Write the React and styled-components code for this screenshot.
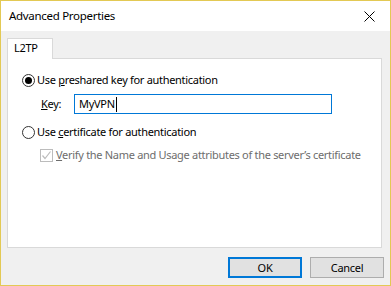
import React from "react";
import styled, { createGlobalStyle } from "styled-components";

const Global = createGlobalStyle`
  html, body { margin: 0; padding: 0; background: #ffffff; }
  * { box-sizing: border-box; }
`;

const Window = styled.div`
  width: 391px;
  height: 286px;
  border: 1px solid #e3c954;
  display: flex;
  flex-direction: column;
  font-family: "Noto Sans", "Open Sans", sans-serif;
  font-size: 11px;
  letter-spacing: -0.3px;
  color: #000;
  white-space: nowrap;
`;

const TitleBar = styled.div`
  height: 30px;
  background: #fff;
  display: flex;
  align-items: center;
  justify-content: space-between;
  padding-left: 8px;
`;

const Title = styled.div`
  font-size: 11.5px;
  line-height: 16px;
  margin-top: -1px;
`;

const CloseButton = styled.div`
  width: 46px;
  height: 30px;
  display: flex;
  align-items: center;
  justify-content: center;
  margin-right: -2px;
`;

const Body = styled.div`
  flex: 1;
  background: #f0f0f0;
  padding: 7px 6px 0 6px;
  display: flex;
  flex-direction: column;
`;

const TabStrip = styled.div`
  display: flex;
  height: 21px;
  margin-right: 2px;
  position: relative;
  z-index: 1;
`;

const Tab = styled.div`
  width: 46px;
  height: 21px;
  border: 1px solid #d9d9d9;
  border-bottom: none;
  background: #fff;
  padding-left: 6px;
  line-height: 18px;
`;

const Panel = styled.div`
  height: 190px;
  margin-top: -1px;
  margin-right: 2px;
  background: #fff;
  border: 1px solid #d9d9d9;
  padding: 13px 0 0 14px;
  display: flex;
  flex-direction: column;
`;

const OptionRow = styled.label`
  display: flex;
  align-items: center;
  height: 16px;
  line-height: 16px;
  margin-top: ${(p) => p.$top || 0}px;
  margin-left: ${(p) => p.$indent || 0}px;
  color: ${(p) => (p.$disabled ? "#6d6d6d" : "#000")};
`;

const RadioCircle = styled.span`
  width: 13px;
  height: 13px;
  border-radius: 50%;
  border: 1px solid #333;
  background: #fff;
  display: flex;
  align-items: center;
  justify-content: center;
  margin-right: 2px;
  flex: none;
  &::after {
    content: "";
    display: ${(p) => (p.$checked ? "block" : "none")};
    width: 7px;
    height: 7px;
    border-radius: 50%;
    background: #000;
  }
`;

const CheckBox = styled.span`
  width: 13px;
  height: 13px;
  border: 1px solid #bcbcbc;
  background: #fff;
  display: flex;
  align-items: center;
  justify-content: center;
  margin-right: 3px;
  flex: none;
`;

const KeyRow = styled.div`
  display: flex;
  align-items: center;
  margin-top: 6px;
  margin-left: 19px;
`;

const KeyLabel = styled.span`
  width: 33px;
  line-height: 16px;
`;

const TextBox = styled.div`
  width: 258px;
  height: 20px;
  border: 1px solid #0078d7;
  padding-left: 4px;
  display: flex;
  align-items: center;
  line-height: 16px;
`;

const Caret = styled.span`
  display: inline-block;
  width: 1px;
  height: 15px;
  background: #000;
  margin-left: 1px;
`;

const Footer = styled.div`
  display: flex;
  justify-content: flex-end;
  gap: 8px;
  margin-top: 9px;
`;

const Button = styled.div`
  width: 74px;
  height: 21px;
  background: #e1e1e1;
  border: ${(p) => (p.$default ? "2px solid #0078d7" : "1px solid #adadad")};
  display: flex;
  align-items: center;
  justify-content: center;
  line-height: 16px;
`;

export default function App() {
  return (
    <>
      <Global />
      <Window>
        <TitleBar>
          <Title>Advanced Properties</Title>
          <CloseButton>
            <svg width="11" height="11" viewBox="0 0 11 11">
              <path d="M0.5 0.5 L10.5 10.5 M10.5 0.5 L0.5 10.5" stroke="#000" strokeWidth="1" fill="none" />
            </svg>
          </CloseButton>
        </TitleBar>
        <Body>
          <TabStrip>
            <Tab>L2TP</Tab>
          </TabStrip>
          <Panel>
            <OptionRow $top={0}>
              <RadioCircle $checked />
              <span>
                Use <u>p</u>reshared key for authentication
              </span>
            </OptionRow>
            <KeyRow>
              <KeyLabel>
                <u>K</u>ey:
              </KeyLabel>
              <TextBox>
                MyVPN
                <Caret />
              </TextBox>
            </KeyRow>
            <OptionRow $top={10}>
              <RadioCircle />
              <span>
                Use <u>c</u>ertificate for authentication
              </span>
            </OptionRow>
            <OptionRow $top={7} $indent={18} $disabled>
              <CheckBox>
                <svg width="11" height="11" viewBox="0 0 11 11">
                  <path d="M1.5 5.5 L4 8.5 L9.5 1.5" stroke="#bcbcbc" strokeWidth="1.2" fill="none" />
                </svg>
              </CheckBox>
              <span>
                <u>V</u>erify the Name and Usage attributes of the server’s certificate
              </span>
            </OptionRow>
          </Panel>
          <Footer>
            <Button $default>OK</Button>
            <Button>Cancel</Button>
          </Footer>
        </Body>
      </Window>
    </>
  );
}
